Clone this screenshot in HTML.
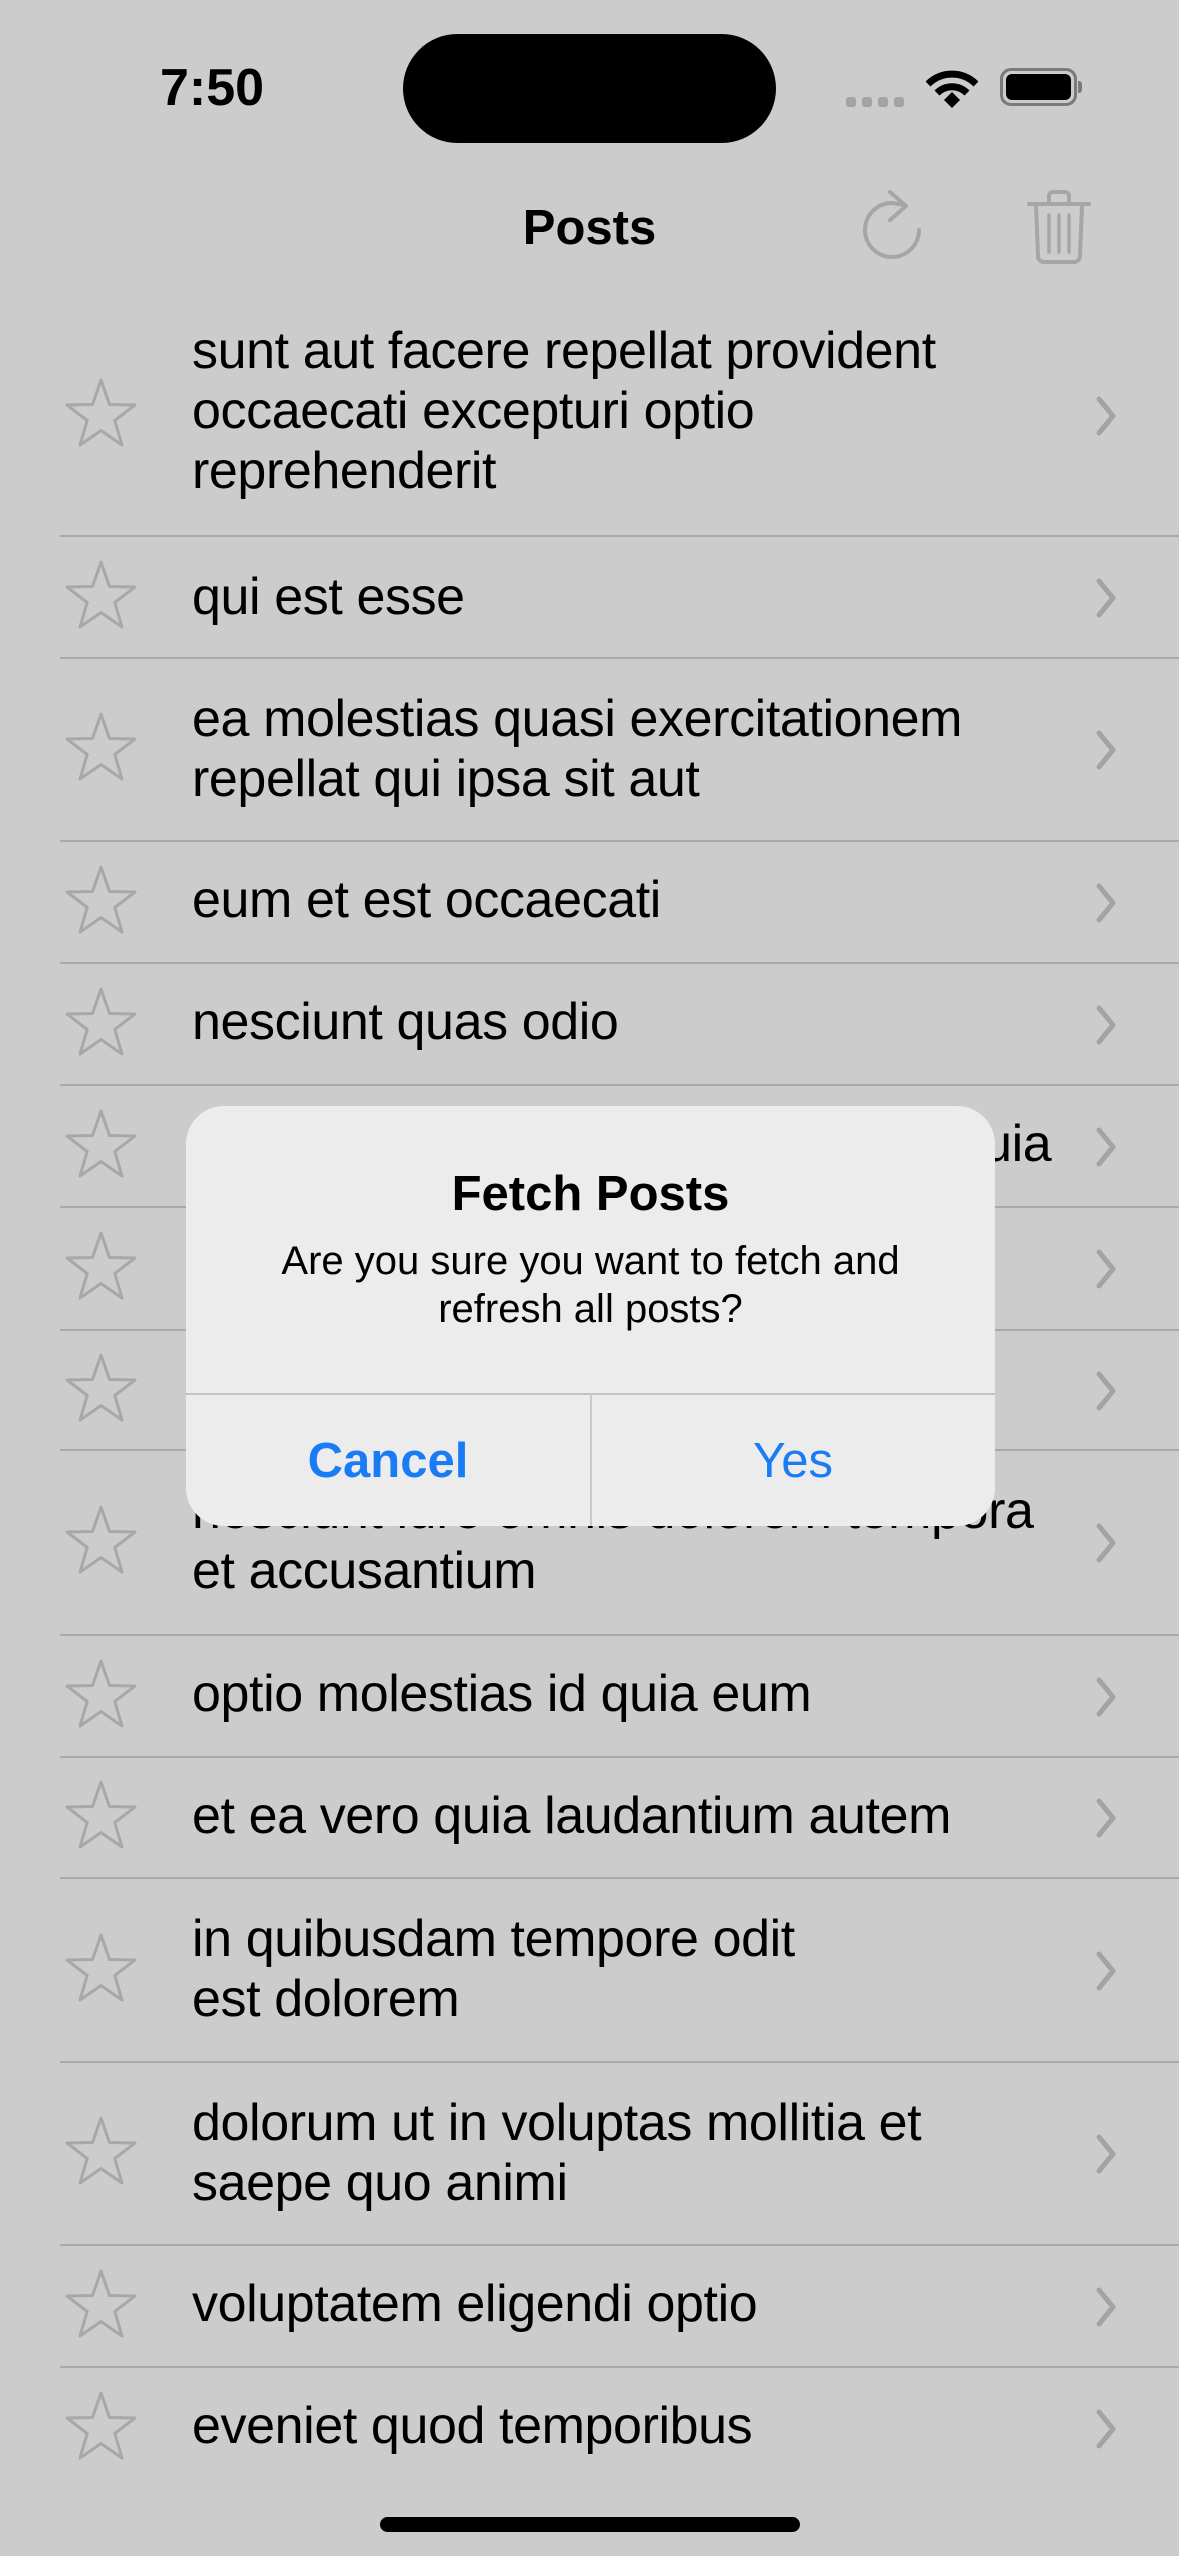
<!DOCTYPE html>
<html><head><meta charset="utf-8"><style>
*{margin:0;padding:0;box-sizing:border-box}
body{width:1179px;height:2556px;background:#cccccc;position:relative;overflow:hidden;font-family:"Liberation Sans",sans-serif;color:#000}
.abs{position:absolute}
.row{position:absolute;left:0;width:1179px}
.row .t{position:absolute;left:192px;font-size:52px;line-height:60px;letter-spacing:-0.4px;white-space:nowrap}
.row .sep{position:absolute;left:60px;right:0;bottom:0;height:2px;background:#a9a9a9}
</style></head><body>
<!-- status bar -->
<div class="abs" style="left:160px;top:58px;font-size:52px;font-weight:bold;line-height:60px">7:50</div>
<div class="abs" style="left:403px;top:34px;width:373px;height:109px;background:#000;border-radius:55px"></div>
<div class="abs" style="left:846px;top:97px;width:10px;height:10px;background:#a3a3a3;border-radius:3px"></div>
<div class="abs" style="left:862px;top:97px;width:10px;height:10px;background:#a3a3a3;border-radius:3px"></div>
<div class="abs" style="left:878px;top:97px;width:10px;height:10px;background:#a3a3a3;border-radius:3px"></div>
<div class="abs" style="left:894px;top:97px;width:10px;height:10px;background:#a3a3a3;border-radius:3px"></div>
<svg class="abs" style="left:926px;top:68px" width="52" height="40" viewBox="0 0 52 40">
<path d="M2 16 A34 34 0 0 1 50 16" fill="none" stroke="#000" stroke-width="7"/>
<path d="M11 25 A21 21 0 0 1 41 25" fill="none" stroke="#000" stroke-width="7"/>
<path d="M18 32 L26 24 L34 32 L26 40 Z" fill="#000"/>
</svg>
<div class="abs" style="left:1000px;top:68px;width:77px;height:38px;border:3px solid #7a7a7a;border-radius:11px"></div>
<div class="abs" style="left:1006px;top:74px;width:65px;height:26px;background:#000;border-radius:6px"></div>
<div class="abs" style="left:1078px;top:81px;width:4px;height:12px;background:#7a7a7a;border-radius:0 3px 3px 0"></div>
<!-- nav -->
<div class="abs" style="left:0;width:1179px;top:198px;text-align:center;font-size:49px;font-weight:bold;line-height:60px">Posts</div>
<svg class="abs" style="left:860px;top:188px" width="70" height="80" viewBox="0 0 70 80">
<path d="M59 42 A27 27 0 1 1 32 15 L44 17" fill="none" stroke="#a6a6a6" stroke-width="4" stroke-linecap="round" stroke-linejoin="round"/>
<path d="M30 4 L46 18 L30 32" fill="none" stroke="#a6a6a6" stroke-width="4" stroke-linecap="round" stroke-linejoin="round"/>
</svg>
<svg class="abs" style="left:1026px;top:188px" width="66" height="78" viewBox="0 0 66 78">
<path d="M3 16 H63" stroke="#a6a6a6" stroke-width="4" stroke-linecap="round"/>
<path d="M23 15 V8 a4 4 0 0 1 4-4 h12 a4 4 0 0 1 4 4 V15" fill="none" stroke="#a6a6a6" stroke-width="4"/>
<path d="M10 17 L12 68 a6 6 0 0 0 6 6 H48 a6 6 0 0 0 6-6 L56 17" fill="none" stroke="#a6a6a6" stroke-width="4"/>
<path d="M23 27 V64 M33 27 V64 M43 27 V64" stroke="#a6a6a6" stroke-width="3.5" stroke-linecap="round"/>
</svg>

<!-- rows -->
<div class="row" style="top:295px;height:242px"><div class="t" style="top:26px">sunt aut facere repellat provident<br>occaecati excepturi optio<br>reprehenderit</div><div class="sep"></div></div>
<div class="row" style="top:537px;height:122px"><div class="t" style="top:30px">qui est esse</div><div class="sep"></div></div>
<div class="row" style="top:659px;height:183px"><div class="t" style="top:30px">ea molestias quasi exercitationem<br>repellat qui ipsa sit aut</div><div class="sep"></div></div>
<div class="row" style="top:842px;height:122px"><div class="t" style="top:28px">eum et est occaecati</div><div class="sep"></div></div>
<div class="row" style="top:964px;height:122px"><div class="t" style="top:28px">nesciunt quas odio</div><div class="sep"></div></div>
<div class="row" style="top:1086px;height:122px"><div class="t" style="top:28px">dolorem eum magni eos aperiam quia</div><div class="sep"></div></div>
<div class="row" style="top:1208px;height:123px"><div class="t" style="top:28px">magnam facilis autem</div><div class="sep"></div></div>
<div class="row" style="top:1331px;height:120px"><div class="t" style="top:28px">dolorem dolore est ipsam</div><div class="sep"></div></div>
<div class="row" style="top:1451px;height:185px"><div class="t" style="top:30px">nesciunt iure omnis dolorem tempora<br>et accusantium</div><div class="sep"></div></div>
<div class="row" style="top:1636px;height:122px"><div class="t" style="top:28px">optio molestias id quia eum</div><div class="sep"></div></div>
<div class="row" style="top:1758px;height:121px"><div class="t" style="top:28px">et ea vero quia laudantium autem</div><div class="sep"></div></div>
<div class="row" style="top:1879px;height:184px"><div class="t" style="top:30px">in quibusdam tempore odit<br>est dolorem</div><div class="sep"></div></div>
<div class="row" style="top:2063px;height:183px"><div class="t" style="top:30px">dolorum ut in voluptas mollitia et<br>saepe quo animi</div><div class="sep"></div></div>
<div class="row" style="top:2246px;height:122px"><div class="t" style="top:28px">voluptatem eligendi optio</div><div class="sep"></div></div>
<div class="row" style="top:2368px;height:122px"><div class="t" style="top:28px">eveniet quod temporibus</div></div>

<svg class="abs" style="left:0;top:0" width="1179" height="2556">
<defs>
<path id="st" d="M0 -36 L8.5 -11.5 L34 -11 L13.8 4.5 L21 29 L0 14.5 L-21 29 L-13.8 4.5 L-34 -11 L-8.5 -11.5 Z" fill="none" stroke="#a8a8a8" stroke-width="3" stroke-linejoin="round"/>
<path id="ch" d="M-7 -17 L7 0 L-7 17" fill="none" stroke="#a3a3a3" stroke-width="5" stroke-linecap="round" stroke-linejoin="round"/>
</defs>
<use href="#st" x="101" y="416"/><use href="#ch" x="1106" y="416"/>
<use href="#st" x="101" y="598"/><use href="#ch" x="1106" y="598"/>
<use href="#st" x="101" y="750"/><use href="#ch" x="1106" y="750"/>
<use href="#st" x="101" y="903"/><use href="#ch" x="1106" y="903"/>
<use href="#st" x="101" y="1025"/><use href="#ch" x="1106" y="1025"/>
<use href="#st" x="101" y="1147"/><use href="#ch" x="1106" y="1147"/>
<use href="#st" x="101" y="1269"/><use href="#ch" x="1106" y="1269"/>
<use href="#st" x="101" y="1391"/><use href="#ch" x="1106" y="1391"/>
<use href="#st" x="101" y="1543"/><use href="#ch" x="1106" y="1543"/>
<use href="#st" x="101" y="1697"/><use href="#ch" x="1106" y="1697"/>
<use href="#st" x="101" y="1818"/><use href="#ch" x="1106" y="1818"/>
<use href="#st" x="101" y="1971"/><use href="#ch" x="1106" y="1971"/>
<use href="#st" x="101" y="2154"/><use href="#ch" x="1106" y="2154"/>
<use href="#st" x="101" y="2307"/><use href="#ch" x="1106" y="2307"/>
<use href="#st" x="101" y="2429"/><use href="#ch" x="1106" y="2429"/>
</svg>

<!-- dialog -->
<div class="abs" style="left:186px;top:1106px;width:809px;height:420px;background:#ececec;border-radius:38px;overflow:hidden">
<div class="abs" style="left:0;width:809px;top:58px;text-align:center;font-size:49px;font-weight:bold;line-height:60px">Fetch Posts</div>
<div class="abs" style="left:0;width:809px;top:131px;text-align:center;font-size:40px;line-height:48px;white-space:nowrap">Are you sure you want to fetch and<br>refresh all posts?</div>
<div class="abs" style="left:0;width:809px;top:287px;height:2px;background:#c2c2c2"></div>
<div class="abs" style="left:404px;top:288px;width:2px;height:132px;background:#c9c9c9"></div>
<div class="abs" style="left:0;width:404px;top:325px;text-align:center;font-size:49px;font-weight:bold;color:#1a7cf5;line-height:60px">Cancel</div>
<div class="abs" style="left:405px;width:404px;top:325px;text-align:center;font-size:49px;color:#1a7cf5;line-height:60px">Yes</div>
</div>

<div class="abs" style="left:380px;top:2517px;width:420px;height:15px;background:#000;border-radius:8px"></div>
</body></html>
